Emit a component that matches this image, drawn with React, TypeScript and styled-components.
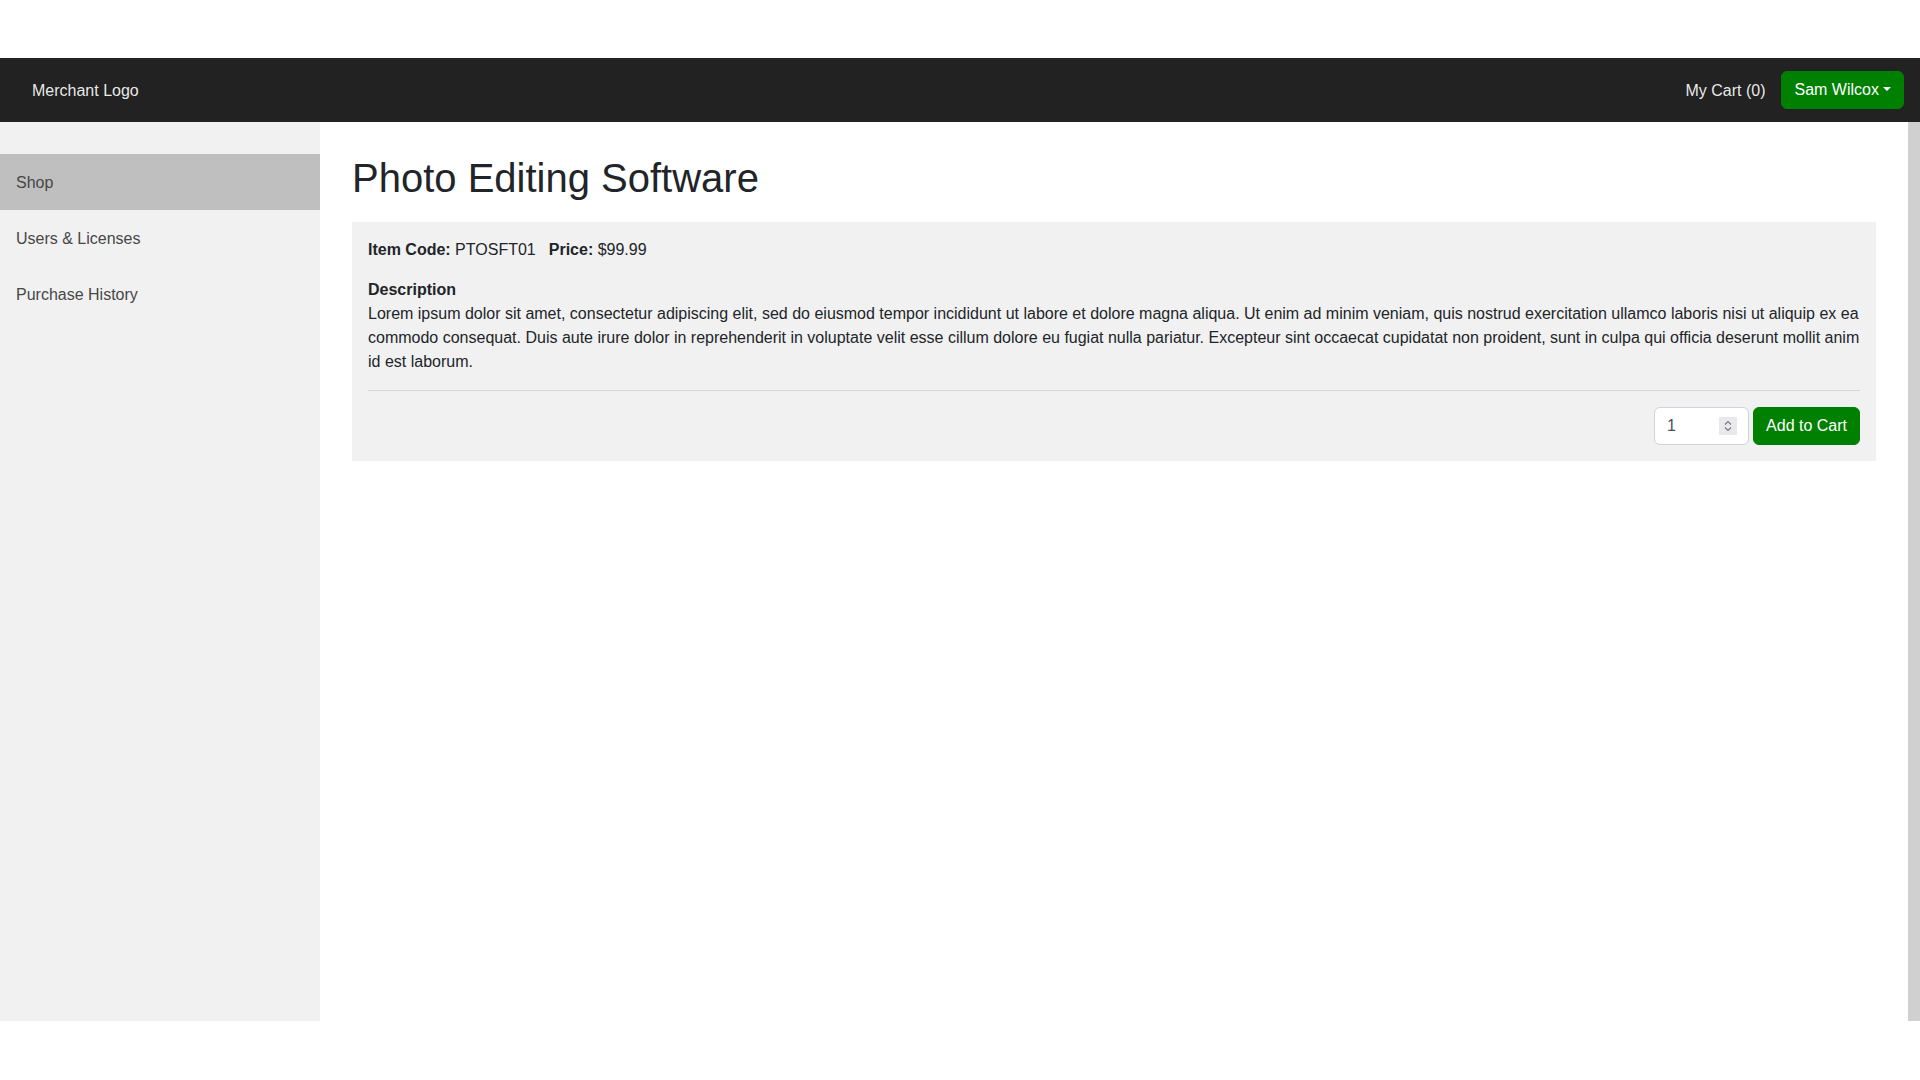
import React from "react";
import styled, { createGlobalStyle } from "styled-components";

const GlobalStyle = createGlobalStyle`
  *, *::before, *::after { box-sizing: border-box; }
  html, body { margin: 0; padding: 0; background: #ffffff; }
  body {
    font-family: "Liberation Sans", Arial, Helvetica, sans-serif;
    font-size: 16px;
    line-height: 1.5;
    color: #212529;
  }
`;

const Page = styled.div`
  padding: 58px 0 59px;
`;

const Navbar = styled.header`
  height: 64px;
  background: #222222;
  display: flex;
  align-items: center;
  justify-content: space-between;
  padding: 0 16px 0 32px;
`;

const Brand = styled.a`
  color: rgba(255, 255, 255, 0.92);
  font-size: 16px;
  text-decoration: none;
  padding-top: 1px;
`;

const NavRight = styled.div`
  display: flex;
  align-items: center;
  gap: 16px;
`;

const CartLink = styled.a`
  color: rgba(255, 255, 255, 0.92);
  text-decoration: none;
  font-size: 16px;
  padding-top: 1px;
`;

const Button = styled.button`
  font-family: inherit;
  font-size: 16px;
  line-height: 24px;
  height: 38px;
  padding: 6px 12px;
  border: 1px solid #008000;
  border-radius: 6px;
  background: #008000;
  color: #ffffff;
  cursor: pointer;
`;

const DropdownButton = styled(Button)`
  &::after {
    content: "";
    display: inline-block;
    margin-left: 0.255em;
    vertical-align: 0.255em;
    border-top: 0.3em solid;
    border-right: 0.3em solid transparent;
    border-left: 0.3em solid transparent;
    border-bottom: 0;
  }
`;

const Body = styled.div`
  display: flex;
  height: 899px;
`;

const Sidebar = styled.nav`
  width: 320px;
  flex-shrink: 0;
  background: #f1f1f1;
  padding-top: 32px;
`;

const SideItem = styled.a<{ $active?: boolean }>`
  display: block;
  padding: 17px 16px 15px;
  line-height: 24px;
  color: #474747;
  text-decoration: none;
  background: ${(p) => (p.$active ? "#bfbfbf" : "transparent")};
`;

const Main = styled.main`
  flex: 1;
  padding: 32px 32px 30px;
`;

const ScrollTrack = styled.div`
  width: 12px;
  flex-shrink: 0;
  background: #d0d0d0;
`;

const Title = styled.h1`
  margin: 0 0 20px;
  font-size: 40px;
  font-weight: 500;
  line-height: 1.2;
  color: #212529;
`;

const Card = styled.section`
  background: #f1f1f1;
  padding: 16px;
`;

const InfoLine = styled.div`
  margin-bottom: 16px;
`;

const Field = styled.span`
  margin-right: 13px;
  & b { font-weight: 700; }
`;

const Label = styled.div`
  font-weight: 700;
`;

const Paragraph = styled.p`
  margin: 0 0 16px;
`;

const Divider = styled.hr`
  margin: 0 0 16px;
  border: 0;
  border-top: 1px solid #d6d6d6;
`;

const Actions = styled.div`
  display: flex;
  justify-content: flex-end;
  align-items: center;
  gap: 4px;
`;

const QtyField = styled.div`
  position: relative;
  width: 95px;
  height: 38px;
`;

const QtyInput = styled.input`
  width: 100%;
  height: 100%;
  padding: 6px 12px;
  font-family: inherit;
  font-size: 16px;
  line-height: 24px;
  color: #495057;
  background: #ffffff;
  border: 1px solid #ced4da;
  border-radius: 6px;
  -moz-appearance: textfield;

  &::-webkit-inner-spin-button,
  &::-webkit-outer-spin-button {
    -webkit-appearance: none;
    margin: 0;
  }
`;

/* Stepper box drawn over the right side of the quantity field */
const Stepper = styled.span`
  position: absolute;
  top: 10px;
  right: 12px;
  width: 18px;
  height: 18px;
  background: #e9e9ed;
  display: flex;
  pointer-events: none;
`;

const lorem =
  "Lorem ipsum dolor sit amet, consectetur adipiscing elit, sed do eiusmod tempor incididunt ut labore et dolore magna aliqua. Ut enim ad minim veniam, quis nostrud exercitation ullamco laboris nisi ut aliquip ex ea commodo consequat. Duis aute irure dolor in reprehenderit in voluptate velit esse cillum dolore eu fugiat nulla pariatur. Excepteur sint occaecat cupidatat non proident, sunt in culpa qui officia deserunt mollit anim id est laborum.";

const menu = [
  { label: "Shop", active: true },
  { label: "Users & Licenses", active: false },
  { label: "Purchase History", active: false },
];

export default function App() {
  return (
    <>
      <GlobalStyle />
      <Page>
        <Navbar>
          <Brand href="#">Merchant Logo</Brand>
          <NavRight>
            <CartLink href="#">My Cart (0)</CartLink>
            <DropdownButton type="button">Sam Wilcox</DropdownButton>
          </NavRight>
        </Navbar>
        <Body>
          <Sidebar>
            {menu.map((m) => (
              <SideItem key={m.label} href="#" $active={m.active}>
                {m.label}
              </SideItem>
            ))}
          </Sidebar>
          <Main>
            <Title>Photo Editing Software</Title>
            <Card>
              <InfoLine>
                <Field>
                  <b>Item Code:</b> PTOSFT01
                </Field>
                <Field>
                  <b>Price:</b> $99.99
                </Field>
              </InfoLine>
              <Label>Description</Label>
              <Paragraph>{lorem}</Paragraph>
              <Divider />
              <Actions>
                <QtyField>
                  <QtyInput type="number" defaultValue={1} min={1} />
                  <Stepper>
                    <svg width="18" height="18" viewBox="0 0 18 18" fill="none">
                      <path d="M6 7.5 9 4.5 12 7.5" stroke="#7a7a7a" strokeWidth="1.2" />
                      <path d="M6 10.5 9 13.5 12 10.5" stroke="#7a7a7a" strokeWidth="1.2" />
                    </svg>
                  </Stepper>
                </QtyField>
                <Button type="button">Add to Cart</Button>
              </Actions>
            </Card>
          </Main>
          <ScrollTrack />
        </Body>
      </Page>
    </>
  );
}
